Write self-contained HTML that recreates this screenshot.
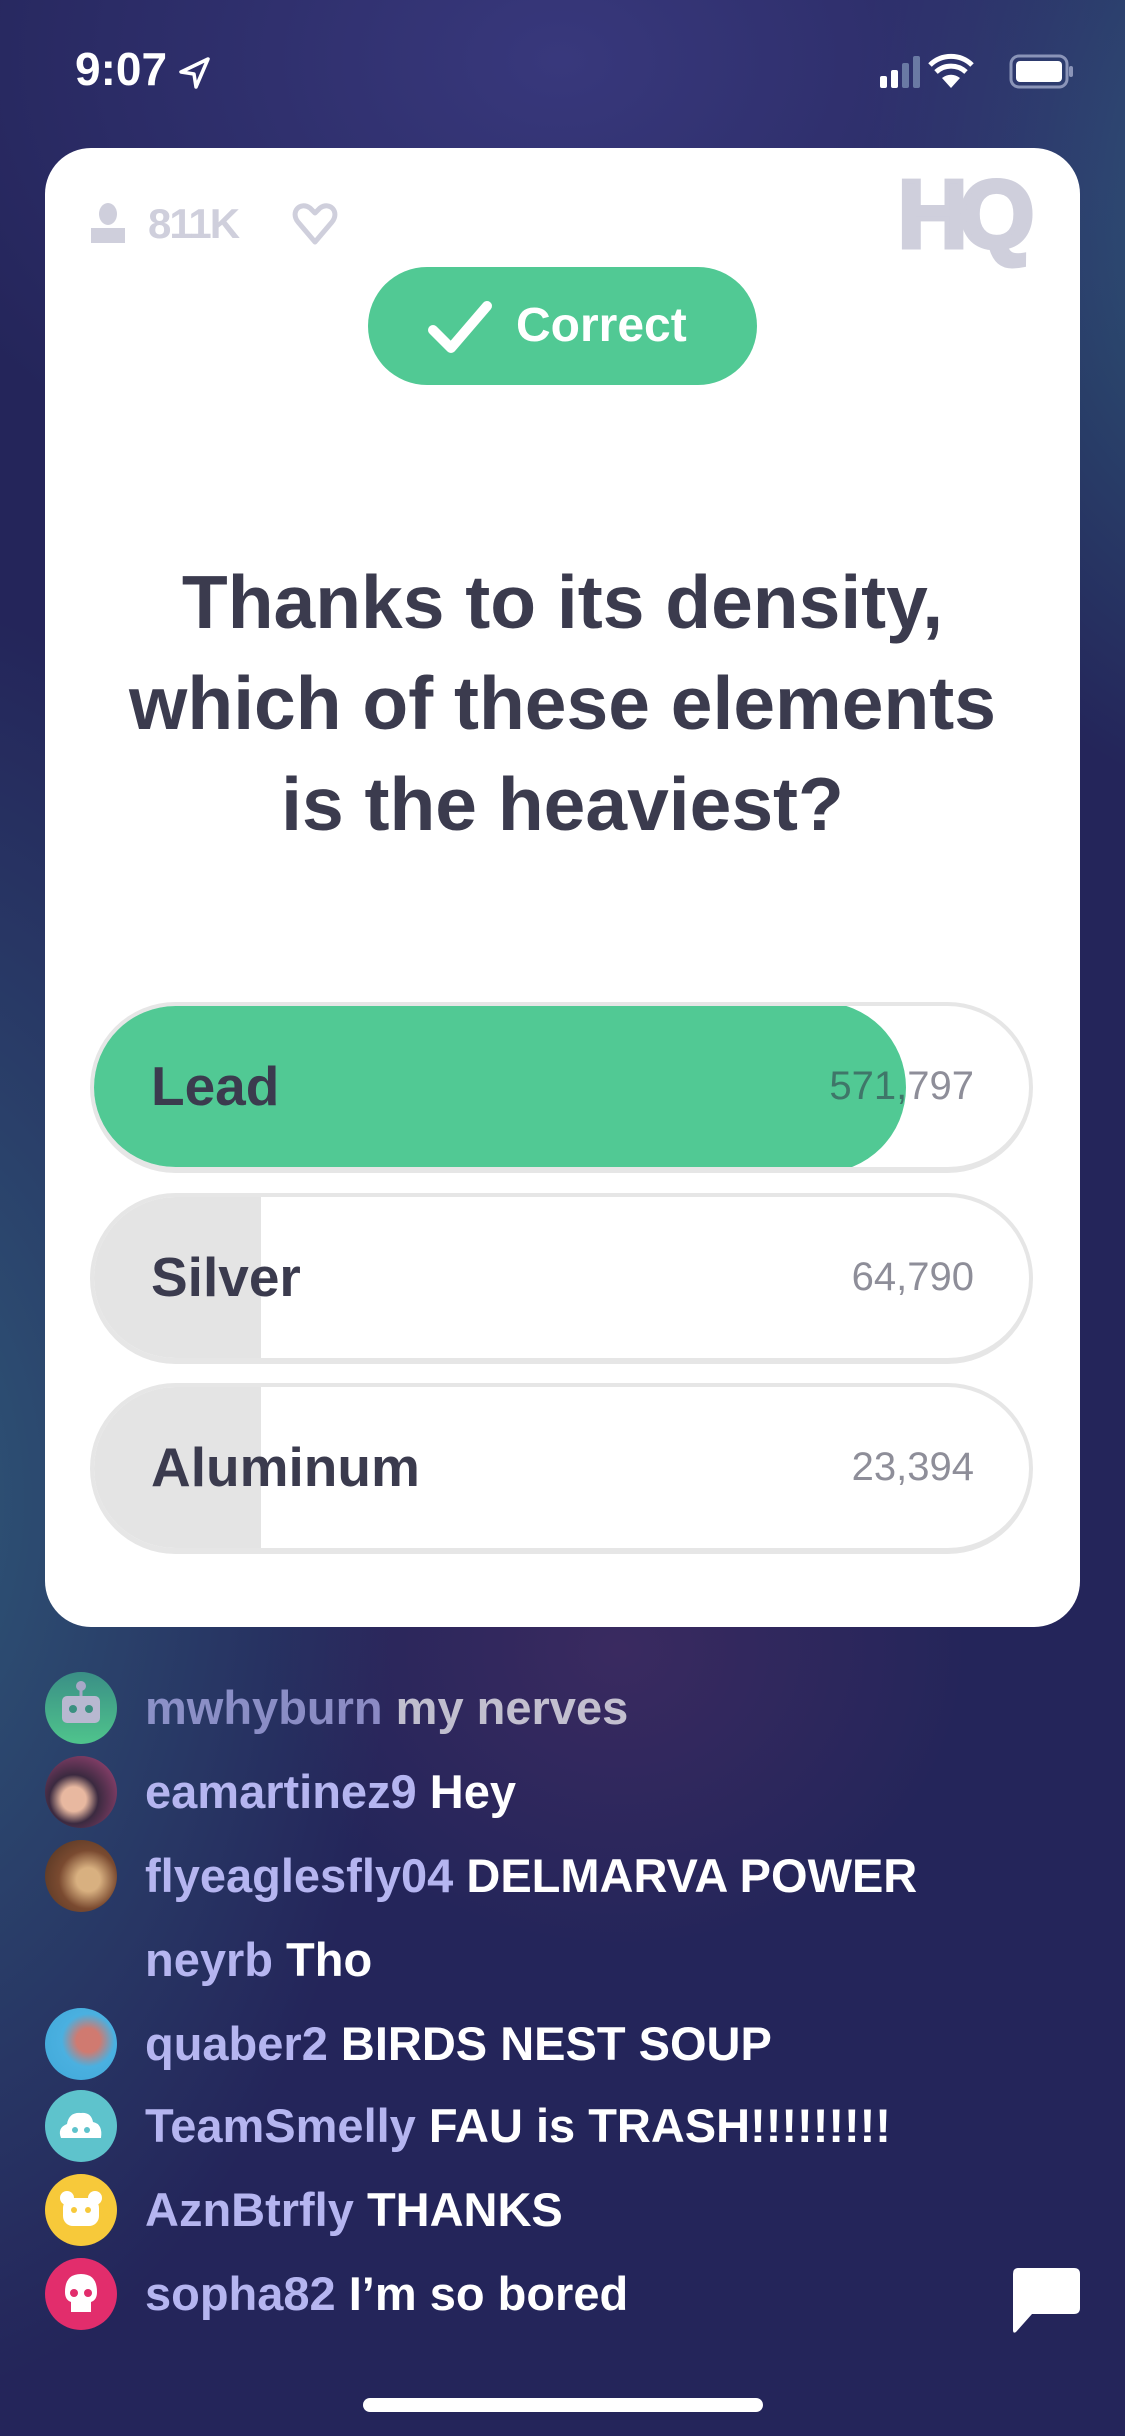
<!DOCTYPE html>
<html><head><meta charset="utf-8"><style>
*{margin:0;padding:0;box-sizing:border-box}
body{width:1125px;height:2436px;overflow:hidden;position:relative;font-family:"Liberation Sans",sans-serif;
background:radial-gradient(ellipse 700px 500px at 560px 60px,#38387c 0%,rgba(56,56,124,0) 100%),
radial-gradient(ellipse 500px 900px at -100px 1500px,#2f5878 0%,rgba(47,88,120,0) 100%),
radial-gradient(ellipse 400px 600px at 1250px 200px,#2e5a78 0%,rgba(46,90,120,0) 100%),
radial-gradient(ellipse 350px 300px at 620px 1650px,#3a2a60 0%,rgba(58,42,96,0) 100%),
#24255a;}
.abs{position:absolute}
.card{left:45px;top:148px;width:1035px;height:1479px;background:#fff;border-radius:46px}
.q{left:0;width:1125px;top:552px;text-align:center;font-weight:bold;font-size:75px;line-height:101px;color:#3b3b4e}
.bar{left:90px;width:943px;height:171px;border-radius:86px;border:4px solid #e6e6e6;border-bottom-width:6px;overflow:hidden;background:#fff}
.fill{position:absolute;left:0;top:0;bottom:0;background:#e4e4e4}
.lbl{position:absolute;left:57px;top:0;line-height:161px;font-size:55px;font-weight:bold;color:#3b3b4e}
.num{position:absolute;right:55px;top:0;line-height:161px;font-size:40px;color:rgba(50,50,70,0.55)}
.chat{left:145px;font-size:47px;font-weight:bold;color:#fff;line-height:60px;white-space:nowrap}
.chat b{color:#b5b5f0}
.av{left:45px;width:72px;height:72px;border-radius:50%}
</style></head><body>
<div class="abs" style="left:75px;top:42px;color:#fff;font-size:46px;font-weight:bold">9:07</div>
<svg class="abs" style="left:178px;top:56px" width="34" height="34" viewBox="0 0 34 34"><path d="M30 3 L3 16 L16 18 L18 31 Z" fill="none" stroke="#fff" stroke-width="3.5" stroke-linejoin="round"/></svg>
<svg class="abs" style="left:878px;top:52px" width="200" height="40" viewBox="0 0 200 40">
<rect x="2" y="24" width="7" height="12" rx="2" fill="#fff"/><rect x="13" y="18" width="7" height="18" rx="2" fill="#fff"/><rect x="24" y="11" width="7" height="25" rx="2" fill="#6a7aa4"/><rect x="35" y="4" width="7" height="32" rx="2" fill="#6a7aa4"/>
<path d="M73 36 L64 26 A14 14 0 0 1 82 26 Z" fill="#fff"/><path d="M58 20 A22 22 0 0 1 88 20" fill="none" stroke="#fff" stroke-width="5"/><path d="M52 13 A30 30 0 0 1 94 13" fill="none" stroke="#fff" stroke-width="5"/>
<rect x="133" y="4" width="56" height="31" rx="8" fill="none" stroke="#8a94b8" stroke-width="3"/><rect x="138" y="9" width="46" height="21" rx="4" fill="#fff"/><rect x="191" y="14" width="4" height="11" rx="2" fill="#8a94b8"/></svg>

<div class="abs card"></div>
<svg class="abs" style="left:90px;top:203px" width="36" height="40" viewBox="0 0 36 40"><ellipse cx="18" cy="11" rx="9" ry="11" fill="#cfcfdc"/><rect x="1" y="25" width="34" height="15" fill="#cfcfdc"/></svg>
<div class="abs" style="left:148px;top:200px;font-size:42px;font-weight:bold;color:#cfcfdc;letter-spacing:-2px">811K</div>
<svg class="abs" style="left:292px;top:202px" width="46" height="44" viewBox="0 0 46 44"><path d="M23 40 L6 20 C-2 10 8 -1 18 6 L23 11 L28 6 C38 -1 48 10 40 20 Z" fill="none" stroke="#cfcfdc" stroke-width="5" stroke-linejoin="round"/></svg>
<div class="abs" style="left:898px;top:160px;font-size:96px;font-weight:bold;color:#cfcfdc;letter-spacing:-8px;-webkit-text-stroke:5px #cfcfdc;line-height:110px">HQ</div>

<div class="abs" style="left:368px;top:267px;width:389px;height:118px;border-radius:59px;background:#51c994"></div>
<svg class="abs" style="left:425px;top:298px" width="70" height="58" viewBox="0 0 70 58"><path d="M8 32 L26 50 L62 8" fill="none" stroke="#fff" stroke-width="10" stroke-linecap="round" stroke-linejoin="round"/></svg>
<div class="abs" style="left:516px;top:298px;font-size:48px;font-weight:bold;color:#fff;line-height:56px">Correct</div>

<div class="abs q">Thanks to its density,<br>which of these elements<br>is the heaviest?</div>

<div class="abs bar" style="top:1002px"><div class="fill" style="width:816px;border-radius:86px;background:#51c994;top:-4px;left:-4px;bottom:-6px"></div><div class="lbl">Lead</div><div class="num">571,797</div></div>
<div class="abs bar" style="top:1193px"><div class="fill" style="width:167px"></div><div class="lbl">Silver</div><div class="num">64,790</div></div>
<div class="abs bar" style="top:1383px"><div class="fill" style="width:167px"></div><div class="lbl">Aluminum</div><div class="num">23,394</div></div>

<svg class="abs" style="left:45px;top:1672px" width="72" height="72" viewBox="0 0 72 72"><defs><linearGradient id="g1" x1="0" y1="0" x2="0" y2="1"><stop offset="0" stop-color="#3a8f86"/><stop offset="1" stop-color="#4fc48c"/></linearGradient></defs><circle cx="36" cy="36" r="36" fill="url(#g1)"/><circle cx="36" cy="14" r="5" fill="#a8a8c8"/><rect x="34.5" y="14" width="3" height="10" fill="#a8a8c8"/><rect x="17" y="24" width="38" height="27" rx="5" fill="#b8b8d0"/><circle cx="28" cy="37" r="4" fill="#3a9080"/><circle cx="44" cy="37" r="4" fill="#3a9080"/></svg>
<div class="abs chat" style="top:1678px;opacity:0.7"><b>mwhyburn</b> my nerves</div>
<div class="abs av" style="top:1756px;background:radial-gradient(circle at 40% 60%,#e8b8a0 0 20%,#3b2a40 40%,#b04a80 100%)"></div>
<div class="abs chat" style="top:1762px"><b>eamartinez9</b> Hey</div>
<div class="abs av" style="top:1840px;background:radial-gradient(circle at 60% 55%,#d8b080 0 20%,#7a4a30 50%,#4a3020 100%)"></div>
<div class="abs chat" style="top:1846px"><b>flyeaglesfly04</b> DELMARVA POWER</div>
<div class="abs chat" style="top:1930px"><b>neyrb</b> Tho</div>
<div class="abs av" style="top:2008px;background:radial-gradient(circle at 60% 45%,#d07a70 0 20%,#4ab0e0 45%,#40a8d8 100%)"></div>
<div class="abs chat" style="top:2014px"><b>quaber2</b> BIRDS NEST SOUP</div>
<svg class="abs" style="left:45px;top:2090px" width="72" height="72" viewBox="0 0 72 72"><circle cx="36" cy="36" r="36" fill="#5ec3cc"/><path d="M16 48 Q12 38 22 34 Q24 22 36 23 Q46 22 48 32 Q58 34 56 48 Z" fill="#fff"/><circle cx="30" cy="40" r="3" fill="#5ec3cc"/><circle cx="42" cy="40" r="3" fill="#5ec3cc"/></svg>
<div class="abs chat" style="top:2096px"><b>TeamSmelly</b> FAU is TRASH!!!!!!!!!</div>
<svg class="abs" style="left:45px;top:2174px" width="72" height="72" viewBox="0 0 72 72"><circle cx="36" cy="36" r="36" fill="#f7c93a"/><circle cx="22" cy="24" r="7" fill="#fff"/><circle cx="50" cy="24" r="7" fill="#fff"/><rect x="18" y="24" width="36" height="28" rx="10" fill="#fff"/><circle cx="29" cy="36" r="3" fill="#f7c93a"/><circle cx="43" cy="36" r="3" fill="#f7c93a"/></svg>
<div class="abs chat" style="top:2180px"><b>AznBtrfly</b> THANKS</div>
<svg class="abs" style="left:45px;top:2258px" width="72" height="72" viewBox="0 0 72 72"><circle cx="36" cy="36" r="36" fill="#e22d6c"/><path d="M20 34 Q20 16 36 16 Q52 16 52 34 Q52 42 46 44 L46 54 L26 54 L26 44 Q20 42 20 34 Z" fill="#fff"/><circle cx="29" cy="35" r="4" fill="#e22d6c"/><circle cx="43" cy="35" r="4" fill="#e22d6c"/></svg>
<div class="abs chat" style="top:2264px"><b>sopha82</b> I’m so bored</div>

<svg class="abs" style="left:1010px;top:2266px" width="72" height="68" viewBox="0 0 72 68"><path d="M8 2 H64 Q70 2 70 8 V42 Q70 48 64 48 H22 L6 66 Q3 68 3 64 V8 Q3 2 8 2 Z" fill="#fff"/></svg>
<div class="abs" style="left:363px;top:2398px;width:400px;height:14px;border-radius:7px;background:#fff"></div>
</body></html>
